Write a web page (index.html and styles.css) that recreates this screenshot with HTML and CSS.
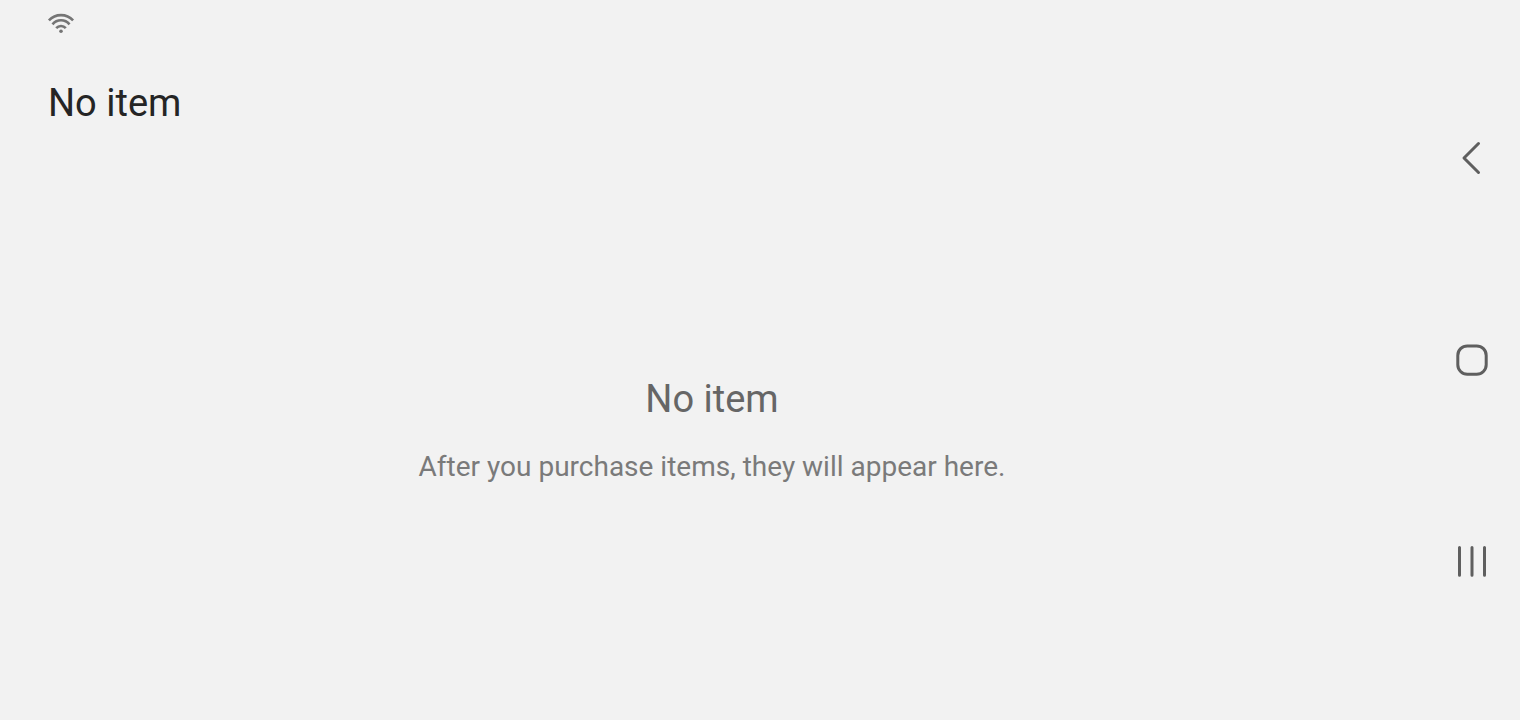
FILE: index.html
```html
<!DOCTYPE html>
<html lang="en">
<head>
<meta charset="utf-8">
<meta name="viewport" content="width=device-width, initial-scale=1">
<title>No item</title>
<link rel="stylesheet" href="styles.css">
</head>
<body>
<div class="app">
  <header class="status-bar">
    <svg class="wifi" viewBox="0 0 28 22" role="img" aria-label="Wi-Fi connected">
      <path d="M1.900 8.400A16.600 16.600 0 0 1 26.100 8.400M5.500 12.300A11 11 0 0 1 22.500 12.300M9.200 16.100A6.500 6.500 0 0 1 18.800 16.100"/>
      <circle cx="14" cy="19.300" r="1.800"/>
    </svg>
  </header>
  <h1 class="title">No item</h1>
  <main class="empty">
    <h2 class="empty-title">No item</h2>
    <p class="empty-text">After you purchase items, they will appear here.</p>
  </main>
</div>
<nav class="nav-bar" aria-label="System navigation">
  <button class="nav-button" type="button" aria-label="Back">
    <svg class="nav-icon" viewBox="0 0 36 36"><path d="M24.500 3.500L10 18L24.500 32.500"/></svg>
  </button>
  <button class="nav-button" type="button" aria-label="Home">
    <svg class="nav-icon" viewBox="0 0 36 36"><rect x="3.800" y="3.900" width="28.400" height="28.400" rx="9.500"/></svg>
  </button>
  <button class="nav-button" type="button" aria-label="Recent apps">
    <svg class="nav-icon" viewBox="0 0 36 36"><path d="M5.500 3.500V31.200M18 3.500V31.200M30.500 3.500V31.200"/></svg>
  </button>
</nav>
</body>
</html>
```
FILE: styles.css
```css
* {
  box-sizing: border-box;
}

body {
  margin: 0;
  min-height: 100vh;
  display: flex;
  background: #f2f2f2;
  color: #252525;
  font-family: Roboto, "Liberation Sans", sans-serif;
}

.app {
  flex: 1;
  display: flex;
  flex-direction: column;
}

.status-bar {
  height: 48px;
  padding: 12px 47px;
}

.wifi {
  display: block;
  width: 28px;
  height: 22px;
  fill: none;
  stroke: #757575;
  stroke-width: 2.6;
}

.wifi circle {
  fill: #757575;
  stroke: none;
}

.title {
  margin: 0;
  padding: 0 48px;
  font-size: 38px;
  font-weight: 400;
  line-height: 110px;
}

.empty {
  flex: 1;
  display: flex;
  flex-direction: column;
  align-items: center;
  justify-content: center;
  gap: 24px;
  padding-bottom: 20px;
  text-align: center;
}

.empty-title {
  margin: 0;
  color: #666;
  font-size: 38px;
  font-weight: 400;
  line-height: 52px;
}

.empty-text {
  margin: 0;
  color: #7a7a7a;
  font-size: 28px;
  line-height: 36px;
}

.nav-bar {
  width: 96px;
  display: flex;
  flex-direction: column;
  align-items: center;
  justify-content: space-between;
  padding: 108px 0;
}

.nav-button {
  width: 96px;
  height: 100px;
  display: grid;
  place-items: center;
  padding: 0;
  border: 0;
  background: none;
}

.nav-icon {
  width: 36px;
  height: 36px;
  fill: none;
  stroke: #5f5f5f;
  stroke-width: 3;
  stroke-linecap: round;
  stroke-linejoin: round;
}
```
